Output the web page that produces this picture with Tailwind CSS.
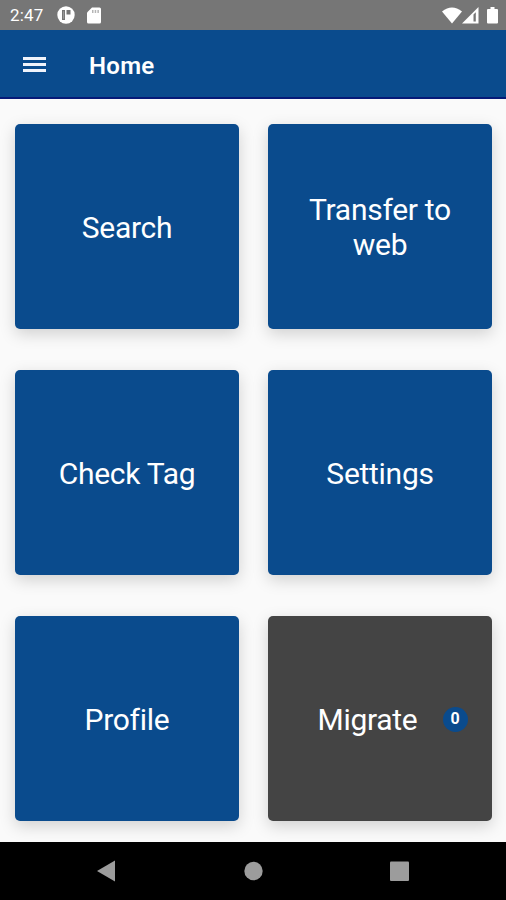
<!DOCTYPE html>
<html lang="en">
  <head>
    <meta charset="UTF-8" />
    <meta name="viewport" content="width=device-width, initial-scale=1.0" />
    <script src="https://cdn.jsdelivr.net/npm/@tailwindcss/browser@4"></script>
    <title>Home</title>
  </head>
  <body class="bg-[#fafafa] font-[Roboto,sans-serif]">
    <div class="flex flex-col w-[506px] h-[900px] overflow-hidden">
      <!-- status bar -->
      <div class="flex items-center justify-between h-[30px] shrink-0 bg-[#767676] pl-[10px] pr-[8px] text-white">
        <div class="flex items-center">
          <span class="w-[47px] text-[17px] leading-[30px] tracking-[0.2px]">2:47</span>
          <svg class="w-[18px] h-[18px]" viewBox="0 0 18 18">
            <circle cx="9" cy="9" r="8.7" fill="#fff" />
            <path d="M5 4h3v10H5zM9.500 4h4v4.500h-4z" fill="#767676" />
            <path d="M6.300 5.300h.8v7.400h-.8z" fill="#aaa" />
          </svg>
          <svg class="w-[14px] h-[17px] ml-[12px]" viewBox="0 0 14 17">
            <path d="M5 .5h7.500Q14 .5 14 2v13q0 1.500-1.500 1.500h-11Q0 16.500 0 15V5.500z" fill="#fff" />
            <path d="M5 3h1.500v3H5zM7.700 3h1.500v3H7.700zM10.400 3h1.500v3h-1.500z" fill="#b5b5b5" />
          </svg>
        </div>
        <div class="flex items-center">
          <svg class="w-[20px] h-[17px]" viewBox="0 0 20 17">
            <path d="M0 4.500Q10-3.500 20 4.500L10 16.500z" fill="#fff" />
          </svg>
          <svg class="w-[17px] h-[17px]" viewBox="0 0 17 17">
            <path d="M16.500 0v16.500H0z" fill="#fff" />
            <path d="M11.500 7.500 13.800 5.200v9.300h-2.300z" fill="#767676" />
          </svg>
          <svg class="w-[11px] h-[17px] ml-[8px]" viewBox="0 0 11 17">
            <path d="M3.500 0h4v2H10q1 0 1 1v12.500q0 1-1 1H1q-1 0-1-1V3q0-1 1-1h2.500z" fill="#fff" />
          </svg>
        </div>
      </div>

      <!-- toolbar -->
      <div class="flex items-center h-[69px] shrink-0 bg-[#0a4b8d] border-b-2 border-[#061a78] pl-[23px] pt-[2px] text-white">
        <div class="flex flex-col gap-[3px] w-[23px]">
          <div class="h-[3px] bg-[#f0f3fb]"></div>
          <div class="h-[3px] bg-[#f0f3fb]"></div>
          <div class="h-[3px] bg-[#f0f3fb]"></div>
        </div>
        <h1 class="ml-[43px] pt-[2px] text-[24px] leading-[28px] tracking-[0.3px] font-semibold">Home</h1>
      </div>

      <!-- menu tiles -->
      <div class="grid grid-cols-[224px_224px] auto-rows-[205px] gap-x-[29px] gap-y-[41px] h-[743px] shrink-0 pt-[24.5px] pl-[15px] overflow-hidden text-white text-[30px] leading-[35px] tracking-[-0.28px] text-center">
        <div class="flex items-center justify-center pt-[2px] rounded-[5px] bg-[#0a4b8d] shadow-[0_5px_16px_rgba(0,0,0,0.17)]">Search</div>
        <div class="flex items-center justify-center pt-[2px] rounded-[5px] bg-[#0a4b8d] shadow-[0_5px_16px_rgba(0,0,0,0.17)]">Transfer to<br />web</div>
        <div class="flex items-center justify-center pt-[2px] rounded-[5px] bg-[#0a4b8d] shadow-[0_5px_16px_rgba(0,0,0,0.17)]">Check Tag</div>
        <div class="flex items-center justify-center pt-[2px] rounded-[5px] bg-[#0a4b8d] shadow-[0_5px_16px_rgba(0,0,0,0.17)]">Settings</div>
        <div class="flex items-center justify-center pt-[2px] rounded-[5px] bg-[#0a4b8d] shadow-[0_5px_16px_rgba(0,0,0,0.17)]">Profile</div>
        <div class="flex items-center pt-[2px] rounded-[5px] bg-[#444444] shadow-[0_5px_16px_rgba(0,0,0,0.17)]">
          <span class="w-[125px] ml-[37px]">Migrate</span>
          <span class="flex items-center justify-center w-[25px] h-[25px] ml-[12.5px] rounded-full bg-[#0a4b8d] text-[16px] leading-none tracking-normal font-bold">0</span>
        </div>
      </div>

      <!-- navigation bar -->
      <div class="flex h-[58px] shrink-0 bg-black">
        <svg class="w-[506px] h-[58px]" viewBox="0 0 506 58" fill="#9c9c9c">
          <path d="M97 29 115 18.500v21z" />
          <circle cx="253.500" cy="29" r="9.200" />
          <rect x="390" y="19.500" width="19" height="19.500" rx="1" />
        </svg>
      </div>
    </div>
  </body>
</html>
